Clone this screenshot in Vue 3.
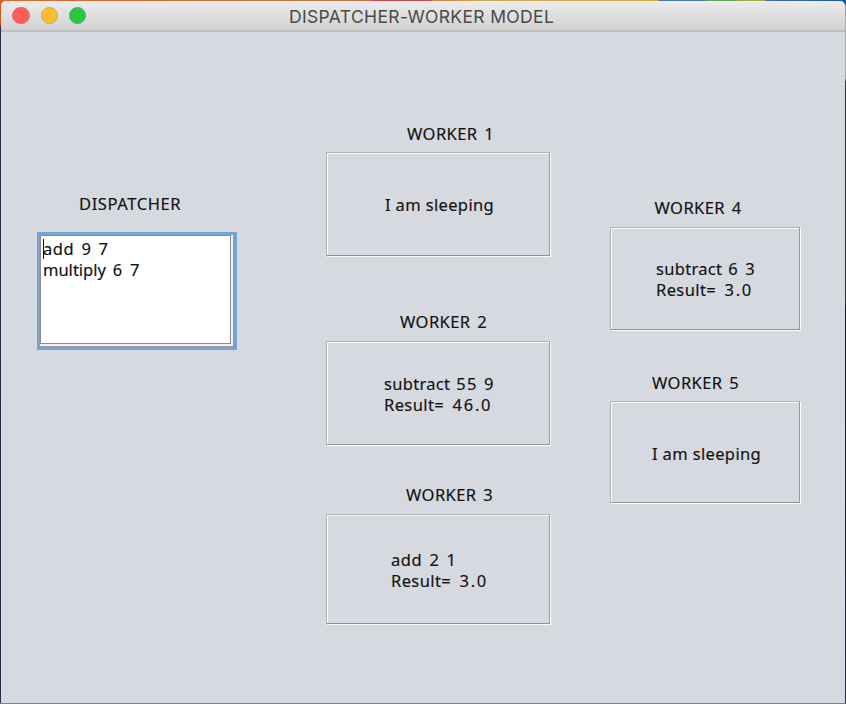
<script setup>
const middleWorkers = [
  { id: 1, lines: ['I am sleeping'] },
  { id: 2, lines: ['subtract 55 9', 'Result= 46.0'] },
  { id: 3, lines: ['add 2 1', 'Result= 3.0'] },
]
const rightWorkers = [
  { id: 4, lines: ['subtract 6 3', 'Result= 3.0'] },
  { id: 5, lines: ['I am sleeping'] },
]
const tasks = ['add 9 7', 'multiply 6 7']
const kind = (line) => line.split(/[ =]/)[0].toLowerCase()
const words = (line) => line.match(/^\D*/)[0]
const numbers = (line) => line.slice(words(line).length)
</script>

<template>
  <div class="desktop">
    <div class="window">
      <header class="titlebar">
        <div class="lights">
          <span class="light close"></span>
          <span class="light minimize"></span>
          <span class="light zoom"></span>
        </div>
        <h1 class="title">DISPATCHER-WORKER MODEL</h1>
      </header>
      <main class="content">
        <section class="dispatcher">
          <h2 class="label">DISPATCHER</h2>
          <div class="focus-ring">
            <div class="textarea">
              <span class="caret"></span>
              <p v-for="t in tasks" :key="t" class="line" :class="kind(t)">{{ words(t) }}<span class="num">{{ numbers(t) }}</span></p>
            </div>
          </div>
        </section>
        <div class="column middle">
          <section v-for="w in middleWorkers" :key="w.id" class="worker" :class="'w' + w.id">
            <h2 class="label">WORKER {{ w.id }}</h2>
            <div class="panel">
              <p v-for="l in w.lines" :key="l" class="line" :class="kind(l)">{{ words(l) }}<span class="num">{{ numbers(l) }}</span></p>
            </div>
          </section>
        </div>
        <div class="column right">
          <section v-for="w in rightWorkers" :key="w.id" class="worker" :class="'w' + w.id">
            <h2 class="label">WORKER {{ w.id }}</h2>
            <div class="panel">
              <p v-for="l in w.lines" :key="l" class="line" :class="kind(l)">{{ words(l) }}<span class="num">{{ numbers(l) }}</span></p>
            </div>
          </section>
        </div>
      </main>
    </div>
  </div>
</template>

<style>
body { margin: 0; overflow: hidden; }
</style>

<style scoped>
* { box-sizing: border-box; }
h1, h2, p { margin: 0; font-weight: 400; white-space: pre; }
.desktop {
  width: 846px;
  height: 704px;
  padding: 1px;
  background:
    linear-gradient(90deg, #d9682d 0, #c9704d 370px, #c24a4c 371px, #c24a4c 431px, #cd7c50 432px, #cda850 480px, #d2b04b 658px, #4778a8 659px, #4778a8 705px, #68a65c 706px, #68a65c 737px, #a5a94e 738px, #a5a94e 765px, #3d70a2 766px, #1b568f 846px) 0 0 / 846px 1px no-repeat,
    linear-gradient(180deg, #e65a13 0, #d9501a 24px, #282c49 27px, #252b46 100%) 0 0 / 6px 703px no-repeat,
    linear-gradient(180deg, #1b568f 0, #1b568f 5px, #a5aaa9 6px, #a5aaa9 78px, #30302f 82px, #30302f 300px, #191d24 310px, #282c49 100%) 840px 0 / 6px 703px no-repeat,
    #7d7f86;
}
.window {
  width: 844px;
  height: 702px;
  border-radius: 5px 5px 0 0;
  overflow: hidden;
  background: #d6d9e0;
  display: flex;
  flex-direction: column;
  font-family: "Noto Sans", "Open Sans", sans-serif;
  color: #111;
}
.titlebar {
  height: 31px;
  display: grid;
  grid-template-columns: 288px 1fr;
  grid-template-rows: 29px;
  align-items: start;
  background: linear-gradient(#ececec, #d2d2d2);
  border-bottom: 2px solid #bfbfc0;
}
.lights { display: flex; gap: 11px; padding: 6px 0 0 11.3px; }
.light { width: 17.4px; height: 17.4px; border-radius: 50%; border: 1px solid; }
.close { background: #ff5f58; border-color: #df6863; }
.minimize { background: #ffbd2e; border-color: #dca846; }
.zoom { background: #28c93f; border-color: #40b64e; }
.title {
  font-family: Inter, sans-serif;
  font-size: 17.5px;
  line-height: 29px;
  padding-top: 1px;
  letter-spacing: 0.35px;
  color: #494949;
}
.content { flex: 1; display: flex; align-items: flex-start; }
.label, .line { font-size: 16.5px; -webkit-text-stroke: 0.15px #111; }
.label { line-height: 22px; height: 22px; letter-spacing: 0.42px; word-spacing: 2px; }
.dispatcher .label { letter-spacing: 0.6px; }
.line { line-height: 21px; height: 21px; }
.num { letter-spacing: 1.3px; word-spacing: 0.8px; }
.i { letter-spacing: 0.36px; }
.add { letter-spacing: 0.5px; }
.add .num { margin-left: 2.6px; }
.multiply .num { margin-left: 2.6px; }
.subtract { letter-spacing: 0.3px; }
.subtract .num { margin-left: 1.4px; }
.result { letter-spacing: 0.4px; }
.result .num { margin-left: 3.6px; letter-spacing: 1.8px; }
.dispatcher { width: 325px; padding: 161px 0 0 36px; }
.dispatcher .label { padding-left: 42px; }
.focus-ring {
  margin-top: 17px;
  width: 200px;
  height: 118px;
  border: 3px solid #75a3d3;
  padding: 0 2px 3px 0;
  background: #f2f2f4;
  box-shadow: inset -1px -1px 0 #9b9ba2;
}
.textarea {
  position: relative;
  height: 109px;
  width: 191px;
  border: 1px solid #8b8c93;
  background: #fff;
  padding: 2px 0 0 2px;
}
.caret { position: absolute; left: 2px; top: 3px; width: 1px; height: 20px; background: #111; }
.middle { width: 284px; padding-top: 91px; }
.right { padding-top: 165px; }
.panel {
  display: flex;
  flex-direction: column;
  border: 1px solid;
  border-color: #b0b2b8 #96989e #8f9197 #b0b2b8;
  box-shadow: inset 1px 1px 0 #fcfcfd, 1px 1px 0 #fcfcfd;
}
.middle .panel { width: 224px; margin-top: 8px; }
.right .panel { width: 190px; margin-top: 8px; }
.w1 .label { padding-left: 81px; }
.w2 .label { padding-left: 74px; }
.w3 .label { padding-left: 80px; }
.w4 .label { padding-left: 44.5px; }
.w5 .label { padding-left: 42px; }
.middle .w1 .panel { height: 104px; margin-top: 7px; padding: 41px 0 0 58px; }
.w2 { margin-top: 55px; }
.w2 .panel { height: 104px; padding: 31px 0 0 57px; }
.w3 { margin-top: 39px; }
.w3 .panel { height: 110px; padding: 34px 0 0 64px; }
.w4 .panel { height: 103px; padding: 30px 0 0 45px; }
.w5 { margin-top: 42px; }
.right .w5 .panel { height: 102px; margin-top: 7px; padding: 41px 0 0 41px; }
</style>
